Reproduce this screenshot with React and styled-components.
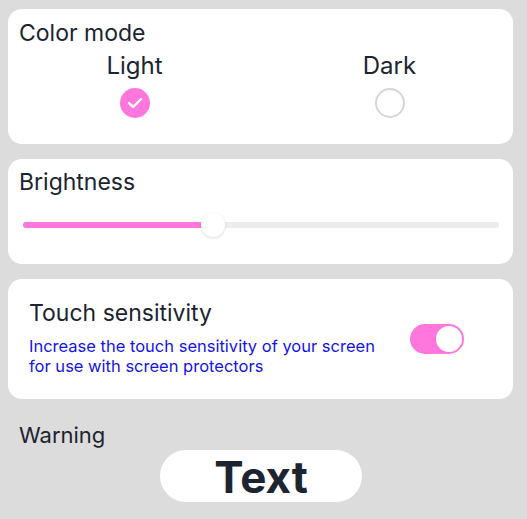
import React from 'react';
import styled, { createGlobalStyle } from 'styled-components';

const GlobalStyle = createGlobalStyle`
  html, body {
    margin: 0;
    padding: 0;
    background: #dcdcdc;
  }
  body {
    font-family: Inter, "Noto Sans", sans-serif;
    color: #1b2430;
  }
`;

const Page = styled.div`
  width: 527px;
  height: 519px;
  box-sizing: border-box;
  padding: 9px 14px 0 8px;
  display: flex;
  flex-direction: column;
  gap: 15px;
`;

const Card = styled.div`
  background: #fff;
  border-radius: 14px;
  box-sizing: border-box;
  height: ${p => p.$h}px;
  padding: ${p => p.$pad};
`;

const Title = styled.div`
  font-size: 23px;
  line-height: 28px;
`;

const ModeRow = styled.div`
  display: grid;
  grid-template-columns: 255px 255px;
  margin-left: -12px;
  margin-top: 4px;
`;

const ModeOption = styled.div`
  display: flex;
  flex-direction: column;
  align-items: center;
  gap: 7px;
`;

const ModeLabel = styled.div`
  font-size: 24px;
  line-height: 30px;
`;

const Radio = styled.div`
  width: 30px;
  height: 30px;
  box-sizing: border-box;
  border-radius: 50%;
  display: flex;
  align-items: center;
  justify-content: center;
  background: ${p => (p.$on ? '#ff77dc' : '#fff')};
  border: ${p => (p.$on ? 'none' : '2px solid #d6d6d6')};
`;

const Track = styled.div`
  position: relative;
  height: 6px;
  border-radius: 3px;
  background: #ececec;
  margin: 26px 3px 0 4px;
`;

const Fill = styled.div`
  height: 100%;
  border-radius: 3px;
  background: #ff77dc;
`;

const Thumb = styled.div`
  position: absolute;
  top: 50%;
  width: 24px;
  height: 24px;
  border-radius: 50%;
  background: #fff;
  transform: translate(-50%, -50%);
  box-shadow: 0 1px 3px rgba(0, 0, 0, 0.15);
`;

const TouchRow = styled.div`
  display: flex;
  align-items: center;
  justify-content: space-between;
`;

const TouchText = styled.div`
  display: flex;
  flex-direction: column;
  gap: 9px;
`;

const TouchTitle = styled.div`
  font-size: 23px;
  line-height: 28px;
`;

const Desc = styled.div`
  font-size: 16.5px;
  line-height: 20px;
  color: #1414e6;
  width: 365px;
`;

const Switch = styled.div`
  width: 54px;
  height: 30px;
  border-radius: 15px;
  background: #ff77dc;
  display: flex;
  align-items: center;
  justify-content: flex-end;
  padding: 0 2px;
  box-sizing: border-box;
  margin-right: 28px;
  margin-top: 3px;
`;

const Knob = styled.div`
  width: 26px;
  height: 26px;
  border-radius: 50%;
  background: #fff;
`;

const Warning = styled.div`
  font-size: 22px;
  line-height: 26px;
  padding-left: 11px;
  margin-top: 8px;
`;

const TextButton = styled.div`
  align-self: flex-start;
  margin-left: 152px;
  margin-top: -13px;
  width: 202px;
  height: 52px;
  border-radius: 26px;
  background: #fff;
  display: flex;
  align-items: center;
  justify-content: center;
  font-size: 44px;
  font-weight: 700;
  padding-top: 2px;
  box-sizing: border-box;
`;

const Check = () => (
  <svg width="16" height="12" viewBox="0 0 16 12">
    <path d="M2 6.2 L6.2 10 L14 2.2" fill="none" stroke="#fff" strokeWidth="2.4" strokeLinecap="round" strokeLinejoin="round" />
  </svg>
);

export default function App() {
  const brightness = 40;
  return (
    <>
      <GlobalStyle />
      <Page>
        <Card $h={135} $pad="10px 11px">
          <Title>Color mode</Title>
          <ModeRow>
            <ModeOption>
              <ModeLabel>Light</ModeLabel>
              <Radio $on><Check /></Radio>
            </ModeOption>
            <ModeOption>
              <ModeLabel>Dark</ModeLabel>
              <Radio />
            </ModeOption>
          </ModeRow>
        </Card>
        <Card $h={105} $pad="9px 11px">
          <Title>Brightness</Title>
          <Track>
            <Fill style={{ width: `${brightness}%` }} />
            <Thumb style={{ left: `${brightness}%` }} />
          </Track>
        </Card>
        <Card $h={120} $pad="20px 21px">
          <TouchRow>
            <TouchText>
              <TouchTitle>Touch sensitivity</TouchTitle>
              <Desc>Increase the touch sensitivity of your screen for use with screen protectors</Desc>
            </TouchText>
            <Switch><Knob /></Switch>
          </TouchRow>
        </Card>
        <Warning>Warning</Warning>
        <TextButton>Text</TextButton>
      </Page>
    </>
  );
}
